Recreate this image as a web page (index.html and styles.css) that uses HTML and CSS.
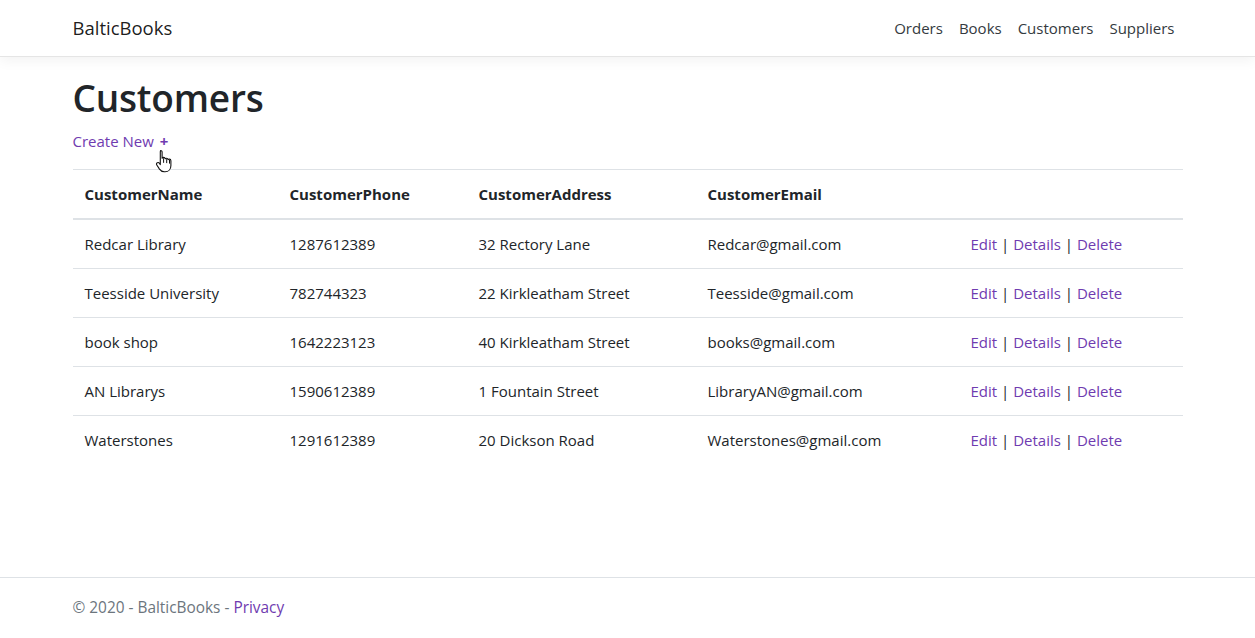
FILE: index.html
```html
<!DOCTYPE html>
<html lang="en">
<head>
<meta charset="utf-8">
<title>Customers - BalticBooks</title>
<link rel="stylesheet" href="styles.css">
</head>
<body>
<div class="page">
  <header class="navbar">
    <div class="container nav-inner">
      <a class="brand" href="#">BalticBooks</a>
      <nav class="nav-links">
        <a class="nav-link" href="#">Orders</a>
        <a class="nav-link" href="#">Books</a>
        <a class="nav-link" href="#">Customers</a>
        <a class="nav-link" href="#">Suppliers</a>
      </nav>
    </div>
  </header>

  <main class="container main">
    <h1 class="title">Customers</h1>
    <p class="create">
      <a class="link" href="#">Create New <span class="plus">+</span></a>
      <svg class="cursor" width="18" height="24" viewBox="0 0 18 24" aria-hidden="true">
        <path d="M5.5 1.5c1 0 1.6.7 1.6 1.6v6.2c.3-.6.9-.9 1.5-.9.9 0 1.5.6 1.6 1.4.3-.4.8-.6 1.3-.6.9 0 1.5.6 1.6 1.4.3-.3.7-.5 1.2-.5 1 0 1.6.8 1.6 1.7v4.6c0 3.6-2.3 6.4-5.8 6.4H9.3c-2.2 0-3.6-1-4.8-2.7L1.8 16c-.6-.9-.3-1.9.5-2.3.8-.4 1.6-.1 2.1.6l.9 1.3V3.1c0-.9.3-1.600.2-1.6z" fill="#fff" stroke="#111" stroke-width="1.1" stroke-linejoin="round"/>
        <path d="M8.6 9.2v4.6M11.7 10.1v4M14.5 11v3.6" stroke="#111" stroke-width="1" fill="none"/>
      </svg>
    </p>

    <table class="table">
      <thead>
        <tr>
          <th class="c1">CustomerName</th>
          <th class="c2">CustomerPhone</th>
          <th class="c3">CustomerAddress</th>
          <th class="c4">CustomerEmail</th>
          <th class="c5"></th>
        </tr>
      </thead>
      <tbody>
        <tr>
          <td>Redcar Library</td><td>1287612389</td><td>32 Rectory Lane</td><td>Redcar@gmail.com</td>
          <td><a class="link" href="#">Edit</a> | <a class="link" href="#">Details</a> | <a class="link" href="#">Delete</a></td>
        </tr>
        <tr>
          <td>Teesside University</td><td>782744323</td><td>22 Kirkleatham Street</td><td>Teesside@gmail.com</td>
          <td><a class="link" href="#">Edit</a> | <a class="link" href="#">Details</a> | <a class="link" href="#">Delete</a></td>
        </tr>
        <tr>
          <td>book shop</td><td>1642223123</td><td>40 Kirkleatham Street</td><td>books@gmail.com</td>
          <td><a class="link" href="#">Edit</a> | <a class="link" href="#">Details</a> | <a class="link" href="#">Delete</a></td>
        </tr>
        <tr>
          <td>AN Librarys</td><td>1590612389</td><td>1 Fountain Street</td><td>LibraryAN@gmail.com</td>
          <td><a class="link" href="#">Edit</a> | <a class="link" href="#">Details</a> | <a class="link" href="#">Delete</a></td>
        </tr>
        <tr>
          <td>Waterstones</td><td>1291612389</td><td>20 Dickson Road</td><td>Waterstones@gmail.com</td>
          <td><a class="link" href="#">Edit</a> | <a class="link" href="#">Details</a> | <a class="link" href="#">Delete</a></td>
        </tr>
      </tbody>
    </table>
  </main>

  <footer class="footer">
    <div class="container">&copy; 2020 - BalticBooks - <a class="link" href="#">Privacy</a></div>
  </footer>
</div>
</body>
</html>
```

FILE: styles.css
```css
* { box-sizing: border-box; }

html, body {
  margin: 0;
  padding: 0;
  height: 100%;
}

body {
  font-family: "Open Sans", "Noto Sans", "Liberation Sans", sans-serif;
  font-size: 15px;
  line-height: 24px;
  color: #212529;
  background: #fff;
}

a { text-decoration: none; }

.page {
  min-height: 100vh;
  display: flex;
  flex-direction: column;
}

.container {
  width: 1140px;
  max-width: 100%;
  margin: 0 auto;
  padding: 0 15px;
}

.navbar {
  height: 57px;
  border-bottom: 1px solid #e5e5e5;
  box-shadow: 0 4px 12px rgba(0, 0, 0, 0.05);
  background: #fff;
}

.nav-inner {
  height: 56px;
  display: flex;
  align-items: center;
  justify-content: space-between;
}

.brand {
  font-size: 18.5px;
  color: rgba(0, 0, 0, 0.9);
  line-height: 30px;
}

.nav-links {
  display: flex;
}

.nav-link {
  color: #343a40;
  padding: 8px 8px;
  line-height: 24px;
}

.main {
  flex: 1;
  padding-top: 17px;
}

.title {
  margin: 0 0 7px;
  font-size: 37px;
  font-weight: 600;
  line-height: 48px;
  letter-spacing: -0.2px;
}

.create {
  margin: 0 0 16px;
  position: relative;
  line-height: 24px;
}

.link { color: #6f3bb0; }

.plus {
  font-weight: 700;
  margin-left: 2px;
}

.cursor {
  position: absolute;
  left: 82px;
  top: 20px;
}

.table {
  width: 100%;
  border-collapse: collapse;
  table-layout: fixed;
}

.table th,
.table td {
  padding: 12px;
  text-align: left;
  vertical-align: top;
  border-top: 1px solid #dee2e6;
  line-height: 24px;
  white-space: nowrap;
}

.table th {
  font-weight: 700;
  border-bottom: 2px solid #dee2e6;
}

.c1 { width: 205px; }
.c2 { width: 189px; }
.c3 { width: 229px; }
.c4 { width: 263px; }
.c5 { width: 224px; }

.footer {
  border-top: 1px solid #dee2e6;
  line-height: 60px;
  color: #6c757d;
  white-space: nowrap;
  font-size: 15.4px;
}
```
